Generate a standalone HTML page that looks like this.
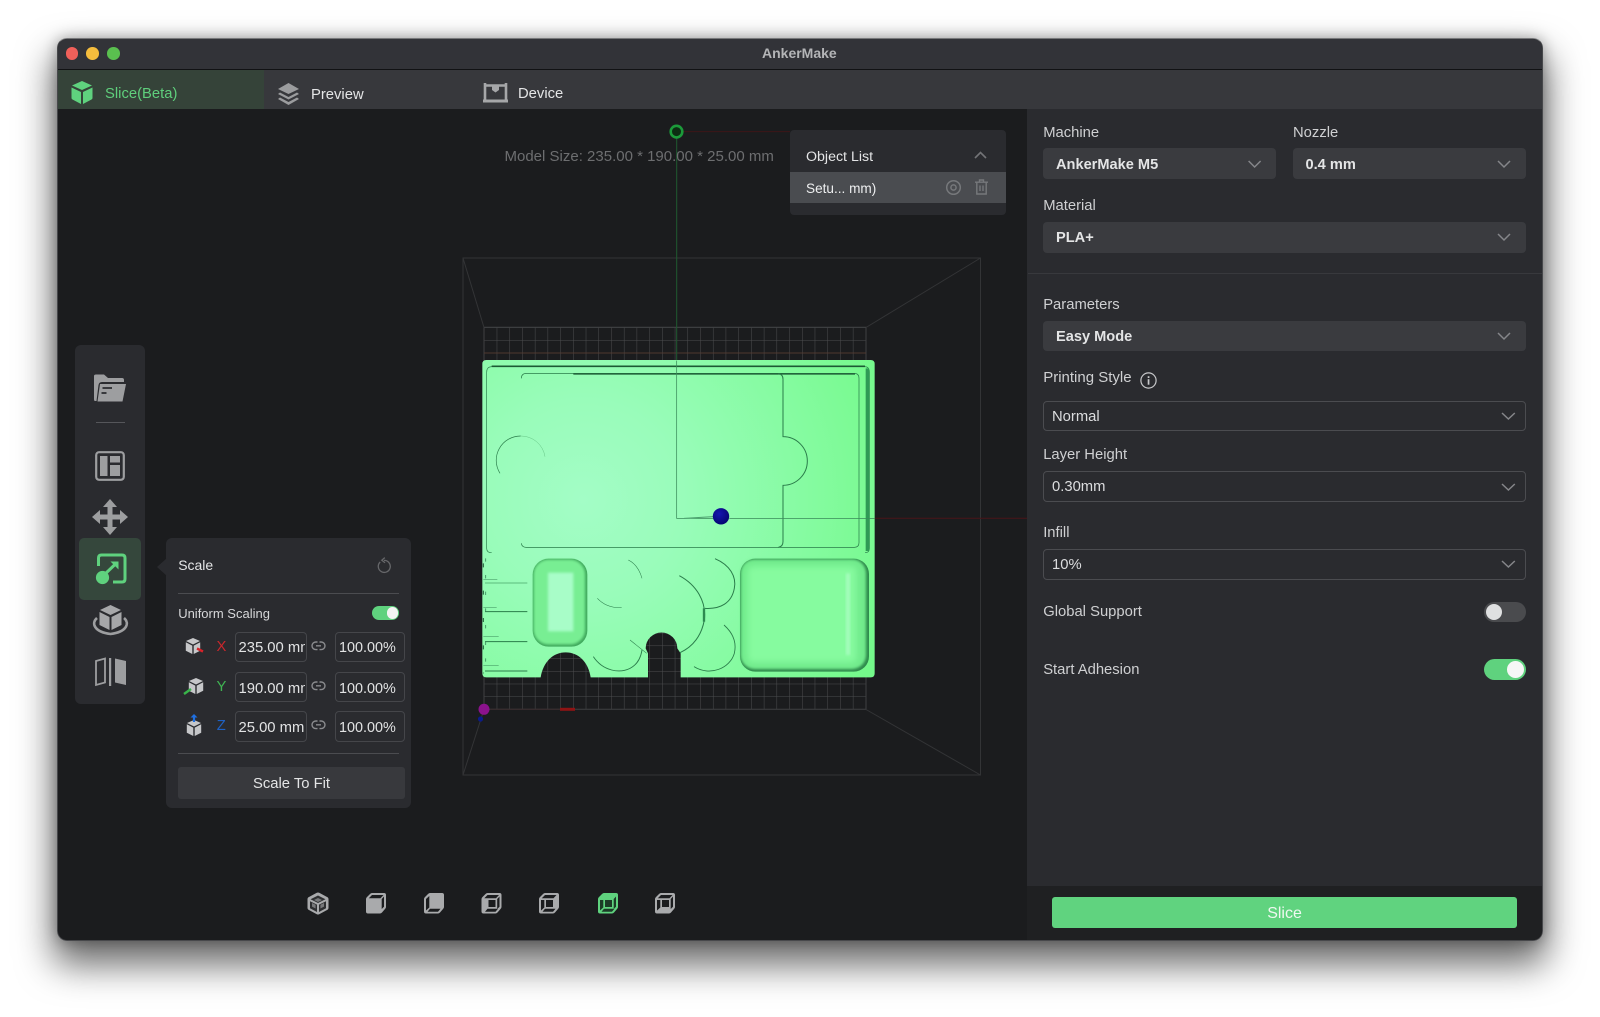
<!DOCTYPE html>
<html>
<head>
<meta charset="utf-8">
<title>AnkerMake</title>
<style>
html,body{margin:0;padding:0;background:#fff;width:1600px;height:1017px;overflow:hidden}
body{font-family:"Liberation Sans",sans-serif;position:relative}
#win{position:absolute;left:57px;top:38px;width:1485.5px;height:902.5px;border-radius:10px;box-shadow:0 20px 36px 4px rgba(0,0,0,.58),0 0 14px rgba(0,0,0,.3);}
#abs{position:absolute;left:0;top:0;width:1600px;height:1017px;filter:blur(.35px)}
.b{position:absolute;box-sizing:border-box}
.t{position:absolute;white-space:nowrap;line-height:22px;height:22px;font-size:14.8px;color:#cfd0d2}
.bold{font-weight:bold;color:#e4e5e6}
.sel{position:absolute;background:#3a3b3f;border-radius:4px}
.sel2{position:absolute;box-sizing:border-box;border:1px solid #4b4c50;border-radius:4px}
.inp{position:absolute;box-sizing:border-box;border:1px solid #45464a;border-radius:4px;color:#e2e3e4;font-size:14.4px;line-height:31px;padding-left:3px;overflow:hidden;white-space:nowrap}
.inp span{display:inline-block;width:66.5px;overflow:hidden;font-size:14.8px;vertical-align:top}
svg{position:absolute;overflow:visible}
</style>
</head>
<body>
<div id="win"></div>
<div id="abs">
<!-- window base -->
<div class="b" style="left:57px;top:38px;width:1485.5px;height:902.5px;border-radius:10px;background:#1b1c1e;overflow:hidden;border:1px solid #47484b;border-top-color:#77787a">
  <div class="b" style="left:0;top:0;width:1485px;height:30px;background:#323338"></div>
  <div class="b" style="left:0;top:29.5px;width:1485px;height:1px;background:#111214"></div>
  <div class="b" style="left:0;top:30.5px;width:1485px;height:39.5px;background:#37383c"></div>
  <div class="b" style="left:0;top:30.5px;width:205.5px;height:39.5px;background:#354339"></div>
  <div class="b" style="left:969px;top:70px;width:516px;height:777px;background:#2a2b2f"></div>
  <div class="b" style="left:969px;top:847px;width:516px;height:55px;background:#1f2022"></div>
</div>

<!-- traffic lights -->
<div class="b" style="left:65.7px;top:47px;width:12.6px;height:12.6px;border-radius:50%;background:#f0605a"></div>
<div class="b" style="left:86.3px;top:47px;width:12.6px;height:12.6px;border-radius:50%;background:#f5bd3d"></div>
<div class="b" style="left:107px;top:47px;width:12.6px;height:12.6px;border-radius:50%;background:#5ac04f"></div>
<div class="t" style="left:762px;top:42px;font-weight:bold;font-size:14px;color:#b4b5b7">AnkerMake</div>

<!-- tabs -->
<svg style="left:71px;top:81px" width="22" height="23" viewBox="0 0 22 23"><path d="M11 0 L21 4.5 L11 9 L1 4.5Z" fill="#5fd27e"/><path d="M0.5 6.5 L10 11 V23 L1.5 18.5 Q.5 18 .5 17Z" fill="#5fd27e"/><path d="M21.5 6.5 L12 11 V23 L20.5 18.5 Q21.5 18 21.5 17Z" fill="#5fd27e"/></svg>
<div class="t" style="left:105px;top:82.5px;color:#5fcf7c">Slice(Beta)</div>
<svg style="left:277px;top:83px" width="23" height="22" viewBox="0 0 23 22" fill="#9b9c9e"><path d="M11.5 0 L22 6 L11.5 11 L1 6Z"/><path d="M3 9.5 L11.5 14 L20 9.5 L22 11 L11.5 16.5 L1 11Z"/><path d="M3 14.5 L11.5 19 L20 14.5 L22 16 L11.5 22 L1 16Z"/></svg>
<div class="t" style="left:311px;top:83.5px;color:#e4e5e6">Preview</div>
<svg style="left:483px;top:83px" width="25" height="20" viewBox="0 0 25 20"><path d="M2 17 V0 M23 17 V0 M2 2.5 H23" stroke="#a6a7a9" stroke-width="2.6" fill="none"/><path d="M9 3 H16 V7 L12.5 9.5 L9 7Z" fill="#a6a7a9"/><rect x="0" y="16.5" width="25" height="3" fill="#a6a7a9"/></svg>
<div class="t" style="left:518px;top:82.5px;color:#e4e5e6">Device</div>

<!-- 3D scene -->
<svg style="left:0;top:0" width="1600" height="1017" viewBox="0 0 1600 1017">
<defs>
<pattern id="g" x="484" y="327.3" width="12.72" height="12.73" patternUnits="userSpaceOnUse"><path d="M0 0 V12.73 M0 0 H12.72" stroke="#4c4d4f" stroke-width="1" fill="none"/></pattern>
<radialGradient id="pl" gradientUnits="userSpaceOnUse" cx="400" cy="480" r="1000"><stop offset="0" stop-color="#a3fdc6"/><stop offset=".3" stop-color="#99fcba"/><stop offset=".7" stop-color="#84fb9f"/><stop offset="1" stop-color="#74f98a"/></radialGradient>
<filter id="bl" x="-20%" y="-20%" width="140%" height="140%"><feGaussianBlur stdDeviation="10"/></filter>
<filter id="bl2" x="-20%" y="-20%" width="140%" height="140%"><feGaussianBlur stdDeviation="4"/></filter>
<radialGradient id="ball" cx=".4" cy=".35" r=".7"><stop offset="0" stop-color="#1515b0"/><stop offset="1" stop-color="#05056e"/></radialGradient>
</defs>
<rect x="484" y="327.3" width="382" height="382" fill="url(#g)"/>
<path d="M484 327.3 H866 V709.3 H484Z" fill="none" stroke="#3f4042"/>
<g fill="none" stroke="#333436" stroke-width="1">
<path d="M463 258 H980.5 V775 H463Z"/>
<path d="M463 258 L484 327.5 M980.5 258 L866 327.5 M980.5 775 L866 709.5 M463 775 L484 709.5"/>
</g>
<path d="M676.5 131.6 H790" stroke="#3d1618" stroke-width="1"/>
<path d="M484 353 H866" stroke="#5a3a2e" stroke-width=".7"/>
<path d="M676.7 137 V360" stroke="#1f5a30" stroke-width="1"/>
<path d="M874 518.3 H1027" stroke="#4a1518" stroke-width="1"/>

<g transform="translate(450,340) scale(.33333)">
<path d="M109 60 H1262 Q1274 60 1274 72 V1000 Q1274 1012 1262 1012 H692 V940 L682 925 A47.5 47.5 0 0 0 587 925 L594 940 V1012 H422 C415 965 385 937 347 937 C309 937 280 965 272 1012 H109 Q97 1012 97 1000 V72 Q97 60 109 60Z" fill="url(#pl)"/>
<!-- grooves -->
<g fill="none" stroke="#2a7c4a">
<path d="M125 638 Q110 638 110 625 V97 Q110 80 125 80 H1245 Q1258 80 1258 97 V625 Q1258 638 1245 638" stroke-width="2"/>
<path d="M125 79 H1245" stroke-width="5" stroke="#1c5a34"/>
<path d="M1252 85 V633" stroke-width="10" stroke="#2f9a55"/>
<path d="M214 115 Q214 100 230 100 H1213 Q1227 100 1227 115 V608 Q1227 622 1213 622 H228 Q216 622 214 610" stroke-width="2.2"/>
<path d="M370 102 H1215" stroke-width="4" stroke="#1c5a34"/>
<path d="M985 102 Q999 102 999 118 V290 A 73 73 0 0 1 999 436 V605 Q999 620 985 622" stroke-width="3"/>
<path d="M150 400 A73 73 0 0 1 212 288" stroke-width="2"/>
<path d="M212 288 A73 73 0 0 1 285 350" stroke-width="1" stroke="#4aa86a"/>
<path d="M680 62 V535 H790" stroke-width="2.2" stroke="#3a8a5a"/>
<path d="M702 535 L790 530" stroke-width="3" stroke="#4c9f6e"/>
<path d="M838 535 H1274" stroke-width="2.2" stroke="#3a8a5a"/>
<!-- left ticks -->
<path d="M105 729 H232" stroke-width="2" stroke="#4aa86a"/>
<path d="M105 815 H232 M105 905 H232 M105 993 H232" stroke-width="3"/>
<path d="M100 718 H142 M100 803 H140 M100 890 H146 M100 977 H146" stroke-width="1.6" stroke="#3a8a5a"/>
<path d="M107 655 V1000" stroke-width="2.5" stroke-dasharray="10 40" stroke="#3a8a5a"/>
<path d="M100 670 V1000" stroke-width="3" stroke-dasharray="12 70" stroke="#1c5a34"/>
<!-- scallops -->
<path d="M535 660 Q565 675 576 715" stroke-width="1.6"/>
<path d="M442 775 Q470 805 515 803" stroke-width="1.6"/>
<path d="M688 707 C740 735 770 785 763 840 C755 885 730 920 690 938" stroke-width="3"/>
<path d="M540 900 L590 940" stroke-width="1.6"/>
<path d="M795 656 C840 675 860 710 853 745 C845 790 810 808 765 805" stroke-width="3"/>
<path d="M822 855 C850 880 860 910 853 940 C840 985 780 1010 732 980" stroke-width="2.6"/>
<path d="M430 950 C460 995 510 1000 540 985 C560 975 572 955 576 930" stroke-width="2.6"/>
<path d="M762 805 V845" stroke-width="7" stroke="#2d8a50"/>
</g>
<!-- left pocket -->
<rect x="248" y="656" width="164" height="264" rx="48" fill="#3fa85c"/>
<rect x="251" y="659" width="154" height="254" rx="44" fill="#78ee93" filter="url(#bl2)"/>
<rect x="294" y="698" width="76" height="176" fill="#a8fdc8" filter="url(#bl2)"/>
<!-- right pocket -->
<rect x="870" y="656" width="387" height="339" rx="46" fill="#2f8a4c"/>
<rect x="872" y="658" width="376" height="329" rx="42" fill="#70ea8b" filter="url(#bl2)"/>
<rect x="892" y="678" width="328" height="290" rx="14" fill="#86fb9f" filter="url(#bl)"/>
<rect x="1188" y="700" width="12" height="245" fill="#a4fcbc" filter="url(#bl2)"/>
</g>
<circle cx="721" cy="516.3" r="8.2" fill="url(#ball)"/>
<circle cx="676.5" cy="131.6" r="5.8" fill="#0c2c12" stroke="#1c9a3a" stroke-width="2.6"/>
<path d="M490 709.3 H560" stroke="#3a2a2c" stroke-width="1"/>
<path d="M560 709.3 H575" stroke="#8f1414" stroke-width="3"/>
<circle cx="484" cy="709.3" r="5.5" fill="#8b128c"/>
<circle cx="480.5" cy="719" r="2.6" fill="#0a1a8a"/>
</svg>
<div class="t" style="left:504.5px;top:145.5px;color:#6d6e70;font-size:15px">Model Size: 235.00 * 190.00 * 25.00 mm</div>

<!-- object list -->
<div class="b" style="left:790px;top:130px;width:216px;height:85px;background:#2a2b2f;border-radius:4px"></div>
<div class="b" style="left:790px;top:172.3px;width:216px;height:30.5px;background:#4a4c50"></div>
<div class="t" style="left:806px;top:146px;color:#e4e5e6;font-size:14.2px">Object List</div>
<svg style="left:974px;top:151px" width="13" height="8" viewBox="0 0 13 8"><path d="M1 7 L6.5 1.5 L12 7" fill="none" stroke="#737477" stroke-width="1.6"/></svg>
<div class="t" style="left:806px;top:177.5px;color:#eeeff0;font-size:13.6px">Setu... mm)</div>
<svg style="left:945px;top:180px" width="17" height="15" viewBox="0 0 17 15" fill="none" stroke="#76787b" stroke-width="1.5"><circle cx="8.5" cy="7.5" r="6.8"/><circle cx="8.5" cy="7.5" r="2.6"/></svg>
<svg style="left:975px;top:179px" width="13" height="16" viewBox="0 0 13 16" fill="none" stroke="#76787b" stroke-width="1.4"><path d="M0 3.2 H13 M4.5 3 V1 H8.5 V3 M1.8 3.5 V15 H11.2 V3.5 M5 6.5 V12 M8 6.5 V12"/></svg>

<!-- left toolbar -->
<div class="b" style="left:75px;top:345px;width:70px;height:359.3px;background:#2a2b2f;border-radius:6px"></div>
<svg style="left:93px;top:374px" width="34" height="28" viewBox="0 0 34 28"><path d="M1 2 Q1 0.5 3 0.5 H11 L15 4 H29 Q31 4 31 6 V8 H9 Q6 8 5.5 11 L3.5 27 H2 Q1 27 1 25Z" fill="#9d9ea0"/><path d="M7 10 H33 L29.5 27.5 H4.5Z" fill="#9d9ea0"/><path d="M9.5 14 H19 M8.5 19 H13.5" stroke="#2a2b2f" stroke-width="1.7"/></svg>
<div class="b" style="left:96px;top:422px;width:29px;height:1px;background:#55565a"></div>
<svg style="left:94.8px;top:450.5px" width="30" height="30" viewBox="0 0 30 30"><rect x="1.2" y="1.2" width="27.6" height="27.6" rx="3" fill="none" stroke="#9d9ea0" stroke-width="2.2"/><rect x="5" y="5" width="7.5" height="20" fill="#9d9ea0"/><rect x="15" y="5" width="10" height="6.5" fill="#9d9ea0"/><rect x="15" y="14" width="10" height="11" fill="#9d9ea0"/></svg>
<svg style="left:92px;top:499px" width="36" height="36" viewBox="0 0 36 36" fill="#9d9ea0"><path d="M18 0 L25 8 H20.5 V15.5 H28 V11 L36 18 L28 25 V20.5 H20.5 V28 H25 L18 36 L11 28 H15.5 V20.5 H8 V25 L0 18 L8 11 V15.5 H15.5 V8 H11Z"/></svg>
<div class="b" style="left:79.3px;top:537.7px;width:62px;height:62.3px;background:#35473c;border-radius:5px"></div>
<svg style="left:94.5px;top:553px" width="32" height="32" viewBox="0 0 32 32"><path d="M3.5 13 V5 Q3.5 2 6.5 2 H27 Q30 2 30 5 V26 Q30 29 27 29 H18" fill="none" stroke="#5fd27e" stroke-width="3"/><circle cx="7.5" cy="24.5" r="6.6" fill="#5fd27e"/><path d="M9 22 L21 10.5" stroke="#5fd27e" stroke-width="3"/><path d="M15.5 8.5 H23.5 V16.5Z" fill="#5fd27e"/></svg>
<svg style="left:92px;top:604px" width="37" height="32" viewBox="0 0 37 32"><path d="M18.5 1 L29 6 L18.5 11 L8 6Z" fill="#a6a7a9"/><path d="M7.5 8 L17.5 13 V26 L7.5 21Z" fill="#a6a7a9"/><path d="M29.5 8 L19.5 13 V26 L29.5 21Z" fill="#a6a7a9"/><path d="M5 14 C-1 19 2 28 18.5 30 C35 28 38 19 32 14" fill="none" stroke="#9d9ea0" stroke-width="2.6"/></svg>
<svg style="left:95px;top:658px" width="31" height="28" viewBox="0 0 31 28"><path d="M1 3 L10 .5 V24.5 L1 27Z" fill="none" stroke="#9d9ea0" stroke-width="1.8"/><rect x="14" y="0" width="2.2" height="28" fill="#9d9ea0"/><path d="M20 .5 L31 3 V27 L20 24.5Z" fill="#9d9ea0"/></svg>

<!-- scale panel -->
<div class="b" style="left:166px;top:538.3px;width:245px;height:269.4px;background:#2a2b2f;border-radius:6px"></div>
<svg style="left:156.5px;top:558px" width="10" height="18" viewBox="0 0 10 18"><path d="M10 0 L0 9 L10 18Z" fill="#2a2b2f"/></svg>
<div class="t" style="left:178.2px;top:554px;color:#e4e5e6;font-size:14px">Scale</div>
<svg style="left:377px;top:557px" width="14" height="16" viewBox="0 0 14 16" fill="none" stroke="#66676a" stroke-width="1.3"><path d="M3.2 5 A6 6 0 1 0 7 3.4"/><path d="M7.8 .6 L4.8 3.2 L8 5.8" /></svg>
<div class="b" style="left:178.2px;top:592.5px;width:220.5px;height:1px;background:#4b4c50"></div>
<div class="t" style="left:178.2px;top:603px;color:#d6d7d9;font-size:13px">Uniform Scaling</div>
<div class="b" style="left:372px;top:605.7px;width:27px;height:14.6px;border-radius:8px;background:#5fd27e"></div>
<div class="b" style="left:386.5px;top:607.2px;width:11.6px;height:11.6px;border-radius:50%;background:#f3f4f3"></div>

<svg style="left:185px;top:637px" width="20" height="20" viewBox="0 0 20 20"><path d="M8 1 L15 4 L8 7.5 L1 4Z" fill="#c6c7c9"/><path d="M.8 5.3 L7.3 8.6 V17 L.8 13.7Z" fill="#c6c7c9"/><path d="M15.2 5.3 L8.7 8.6 V17 L15.2 13.7Z" fill="#c6c7c9"/><path d="M12 11.5 L18 14.5" stroke="#d8232a" stroke-width="2.4"/></svg>
<svg style="left:183px;top:677px" width="21" height="20" viewBox="0 0 21 20"><path d="M13 1 L20 4 L13 7.5 L6 4Z" fill="#c6c7c9"/><path d="M5.8 5.3 L12.3 8.6 V17 L5.8 13.7Z" fill="#c6c7c9"/><path d="M20.2 5.3 L13.7 8.6 V17 L20.2 13.7Z" fill="#c6c7c9"/><path d="M8 12 L1 17" stroke="#39b54a" stroke-width="2.4"/></svg>
<svg style="left:185.5px;top:714px" width="16" height="22" viewBox="0 0 16 22"><path d="M8 6 L15 9 L8 12.5 L1 9Z" fill="#c6c7c9"/><path d="M.8 10.3 L7.3 13.6 V22 L.8 18.7Z" fill="#c6c7c9"/><path d="M15.2 10.3 L8.7 13.6 V22 L15.2 18.7Z" fill="#c6c7c9"/><path d="M8 1 V8" stroke="#1f6fe0" stroke-width="2.2"/><path d="M4.5 3.5 L8 0 L11.5 3.5Z" fill="#1f6fe0"/></svg>

<div class="t" style="left:216.5px;top:636px;color:#c9272c">X</div>
<div class="t" style="left:216.5px;top:676px;color:#3fb452">Y</div>
<div class="t" style="left:216.8px;top:715px;color:#1f62c4">Z</div>

<div class="inp" style="left:235px;top:631.7px;width:72px;height:30.6px;padding-left:2.5px"><span>235.00 mm</span></div>
<div class="inp" style="left:235px;top:672px;width:72px;height:30.3px;padding-left:2.5px;line-height:32px"><span>190.00 mm</span></div>
<div class="inp" style="left:235px;top:711px;width:72px;height:30.7px;padding-left:2.5px;line-height:32px"><span>25.00 mm</span></div>
<div class="inp" style="left:335px;top:631.7px;width:69.7px;height:30.6px">100.00%</div>
<div class="inp" style="left:335px;top:672px;width:69.7px;height:30.3px;line-height:32px">100.00%</div>
<div class="inp" style="left:335px;top:711px;width:69.7px;height:30.7px;line-height:32px">100.00%</div>

<svg style="left:311.5px;top:641px" width="13" height="10" viewBox="0 0 13 10" fill="none" stroke="#8a8b8e" stroke-width="1.4"><path d="M5.5 1 H3.8 A3.8 3.8 0 0 0 3.8 8.6 H5.5 M7.5 1 H9.2 A3.8 3.8 0 0 1 9.2 8.6 H7.5 M4 4.8 H9"/></svg>
<svg style="left:311.5px;top:681px" width="13" height="10" viewBox="0 0 13 10" fill="none" stroke="#8a8b8e" stroke-width="1.4"><path d="M5.5 1 H3.8 A3.8 3.8 0 0 0 3.8 8.6 H5.5 M7.5 1 H9.2 A3.8 3.8 0 0 1 9.2 8.6 H7.5 M4 4.8 H9"/></svg>
<svg style="left:311.5px;top:720px" width="13" height="10" viewBox="0 0 13 10" fill="none" stroke="#8a8b8e" stroke-width="1.4"><path d="M5.5 1 H3.8 A3.8 3.8 0 0 0 3.8 8.6 H5.5 M7.5 1 H9.2 A3.8 3.8 0 0 1 9.2 8.6 H7.5 M4 4.8 H9"/></svg>

<div class="b" style="left:178.2px;top:753.3px;width:220.5px;height:1px;background:#4b4c50"></div>
<div class="b" style="left:178px;top:767.3px;width:227px;height:32px;background:#38393d;border-radius:3px;color:#e4e5e6;font-size:14.8px;line-height:35px;text-align:center">Scale To Fit</div>

<!-- bottom view cubes -->
<svg style="left:0;top:0" width="1600" height="1017" viewBox="0 0 1600 1017">
<defs>
<path id="hull" d="M7 1 H19 Q21 1 21 3 V15 Q21 16 20 17 L17 20.5 Q16 21.5 15 21.5 H3 Q1 21.5 1 19.5 V7 Q1 6 2 5 L5 2 Q6 1 7 1Z"/>
<path id="ptop" d="M7 3 H18.5 L15.5 6.2 H3.8Z"/>
<path id="pleft" d="M3 8 H6.3 V15.5 L3 18.5Z"/>
<path id="pright" d="M19 4.5 V14.7 L16.7 17 V7Z"/>
<path id="pbot" d="M4.5 19.8 H15 L17.5 16.7 H7Z"/>
<path id="pcen" d="M8 8 H15 V15 H8Z"/>
</defs>
<!-- iso -->
<g transform="translate(307,892)">
<path d="M11 .5 Q11.6 .5 12.2 .8 L20.5 5.2 Q21.5 5.8 21.5 7 V16 Q21.5 17.2 20.5 17.8 L12.2 22.2 Q11 22.8 9.8 22.2 L1.5 17.8 Q.5 17.2 .5 16 V7 Q.5 5.8 1.5 5.2 L9.8 .8 Q10.4 .5 11 .5Z" fill="#a9aaac"/>
<path d="M11 3.5 L18.5 7.3 L11 11 L3.5 7.3Z M3 9.2 L10 12.6 V20 L3 16.2Z M19 9.2 L12 12.6 V20 L19 16.2Z" fill="#2e2f31"/>
<path d="M11 6 L15 8 L11 10 L7 8Z M5 11 L8.6 12.8 V16.5 L5 14.6Z M17 11 L13.4 12.8 V16.5 L17 14.6Z" fill="#77787a"/>
</g>
<g transform="translate(365,892)" fill="#1b1c1e"><use href="#hull" fill="#a9aaac"/><use href="#ptop"/><use href="#pright"/></g>
<g transform="translate(423,892)" fill="#1b1c1e"><use href="#hull" fill="#a9aaac"/><path d="M3 7 L6.3 4 V15.5 L3 18.5Z"/><use href="#pbot"/></g>
<g transform="translate(480.5,892)" fill="#1b1c1e"><use href="#hull" fill="#a9aaac"/><use href="#ptop"/><use href="#pright"/><use href="#pbot"/><use href="#pcen"/></g>
<g transform="translate(538,892)" fill="#1b1c1e"><use href="#hull" fill="#a9aaac"/><use href="#ptop"/><use href="#pleft"/><use href="#pbot"/><use href="#pcen"/></g>
<g transform="translate(597,892)" fill="#1c3a27"><use href="#hull" fill="#5fd27e"/><use href="#pleft"/><use href="#pright"/><use href="#pbot"/><use href="#pcen"/></g>
<g transform="translate(654,892)" fill="#1b1c1e"><use href="#hull" fill="#a9aaac"/><use href="#ptop"/><use href="#pleft"/><use href="#pright"/><use href="#pcen"/></g>
</svg>

<!-- right panel -->
<div class="t" style="left:1043.2px;top:121.7px">Machine</div>
<div class="t" style="left:1293px;top:121.7px">Nozzle</div>
<div class="sel" style="left:1043.2px;top:148.3px;width:232.8px;height:30.7px"></div>
<div class="sel" style="left:1293px;top:148.3px;width:232.8px;height:30.7px"></div>
<div class="t bold" style="left:1056px;top:153.5px;font-size:14.6px">AnkerMake M5</div>
<div class="t bold" style="left:1305.5px;top:153.5px;font-size:14.6px">0.4 mm</div>

<div class="t" style="left:1043.2px;top:195px">Material</div>
<div class="sel" style="left:1043.2px;top:221.7px;width:482.5px;height:31px"></div>
<div class="t bold" style="left:1056px;top:227px;font-size:14.6px">PLA+</div>

<div class="b" style="left:1027.5px;top:273px;width:514px;height:1px;background:#38393d"></div>
<div class="t" style="left:1043.2px;top:294px">Parameters</div>
<div class="sel" style="left:1043.2px;top:320.7px;width:482.5px;height:30.5px"></div>
<div class="t bold" style="left:1056px;top:326px;font-size:14.6px">Easy Mode</div>

<div class="t" style="left:1043.2px;top:366.7px;font-size:15px">Printing Style</div>
<svg style="left:1139.5px;top:371.5px" width="17" height="17" viewBox="0 0 17 17"><circle cx="8.5" cy="8.5" r="7.6" fill="none" stroke="#c8c9cb" stroke-width="1.2"/><rect x="7.7" y="7.2" width="1.7" height="5.5" fill="#c8c9cb"/><rect x="7.7" y="4.2" width="1.7" height="1.8" fill="#c8c9cb"/></svg>
<div class="sel2" style="left:1043.2px;top:401px;width:482.5px;height:30.3px"></div>
<div class="t" style="left:1052px;top:406px;color:#dcdddf">Normal</div>

<div class="t" style="left:1043.2px;top:444px">Layer Height</div>
<div class="sel2" style="left:1043.2px;top:471px;width:482.5px;height:30.7px"></div>
<div class="t" style="left:1052px;top:476px;color:#dcdddf">0.30mm</div>

<div class="t" style="left:1043.2px;top:522.3px">Infill</div>
<div class="sel2" style="left:1043.2px;top:549.3px;width:482.5px;height:30.4px"></div>
<div class="t" style="left:1052px;top:554px;color:#dcdddf">10%</div>

<div class="t" style="left:1043.2px;top:600.7px">Global Support</div>
<div class="b" style="left:1483.7px;top:601.7px;width:42px;height:20.6px;border-radius:11px;background:#4a4b4e"></div>
<div class="b" style="left:1485.8px;top:603.6px;width:16.6px;height:16.6px;border-radius:50%;background:#dfe0e1"></div>
<div class="t" style="left:1043.2px;top:659px">Start Adhesion</div>
<div class="b" style="left:1483.7px;top:659.3px;width:42px;height:20.6px;border-radius:11px;background:#5fd27e"></div>
<div class="b" style="left:1507.2px;top:661.3px;width:16.8px;height:16.8px;border-radius:50%;background:#f6f7f6"></div>

<!-- chevrons -->
<svg style="left:0;top:0" width="1600" height="1017" viewBox="0 0 1600 1017" fill="none" stroke="#85868a" stroke-width="1.5">
<path d="M1248.6 161 L1254.6 167 L1260.6 161"/>
<path d="M1498 161 L1504 167 L1510 161"/>
<path d="M1498 234 L1504 240 L1510 234"/>
<path d="M1498 333 L1504 339 L1510 333"/>
<path d="M1502 413 L1508.4 419 L1514.8 413"/>
<path d="M1502 484 L1508.4 490 L1514.8 484"/>
<path d="M1502 561 L1508.4 567 L1514.8 561"/>
</svg>

<div class="b" style="left:1051.7px;top:897.3px;width:465.7px;height:31px;background:#60d37f;border-radius:3px;color:#eef8f0;font-size:16px;line-height:33px;text-align:center">Slice</div>
</div>
</body>
</html>
